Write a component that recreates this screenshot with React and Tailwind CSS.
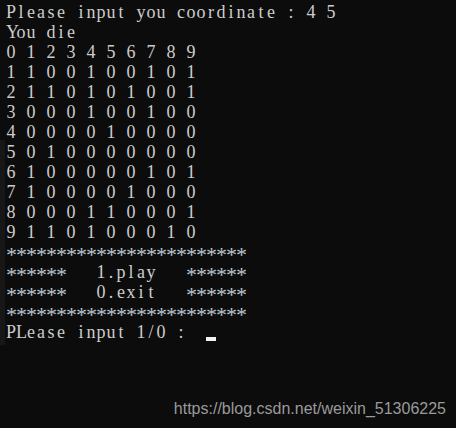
import React from "react";

const lines = [
  "Please input you coordinate : 4 5",
  "You die",
  "0 1 2 3 4 5 6 7 8 9",
  "1 1 0 0 1 0 0 1 0 1",
  "2 1 1 0 1 0 1 0 0 1",
  "3 0 0 0 1 0 0 1 0 0",
  "4 0 0 0 0 1 0 0 0 0",
  "5 0 1 0 0 0 0 0 0 0",
  "6 1 0 0 0 0 0 1 0 1",
  "7 1 0 0 0 0 1 0 0 0",
  "8 0 0 0 1 1 0 0 0 1",
  "9 1 1 0 1 0 0 0 1 0",
  "************************",
  "******   1.play   ******",
  "******   0.exit   ******",
  "************************",
  "PLease input 1/0 :  ",
];

// console cell: every char takes 10px like the windows console font
function Cell({ ch }) {
  if (ch === "*") {
    return (
      <span className="inline-block w-[10px] h-[20px] text-center text-[22px] leading-[26px] text-[#b9c3cc]">
        *
      </span>
    );
  }
  return (
    <span className="inline-block w-[10px] h-[20px] text-center">
      {ch === " " ? "\u00a0" : ch}
    </span>
  );
}

function Line({ text, cursor }) {
  return (
    <div className="flex h-[20px] whitespace-pre">
      {text.split("").map((ch, i) => (
        <Cell key={i} ch={ch} />
      ))}
      {cursor && (
        <span className="inline-block w-[10px] h-[20px] relative">
          <span className="absolute left-0 top-[15px] w-[10px] h-[4px] bg-[#f2f2f2]" />
        </span>
      )}
    </div>
  );
}

export default function App() {
  return (
    <div className="w-[456px] h-[428px] bg-[#0c0c0c] flex flex-col overflow-hidden">
      <div className="flex">
        <div className="w-[6px] shrink-0">
          <div className="mt-[140px] h-[205px] w-[5px] bg-[#171717]" />
        </div>
        <div
          className="pt-[2px] text-[18px] leading-[20px] text-[#cccccc]"
          style={{ fontFamily: '"Liberation Serif", "Noto Sans CJK SC", serif' }}
        >
          {lines.map((l, i) => (
            <Line key={i} text={l} cursor={i === lines.length - 1} />
          ))}
        </div>
      </div>
      <div className="flex-1" />
      <div
        className="flex justify-end pr-[10px] pb-[10px] text-[16px] leading-[18px] text-[#9a9a9a]"
        style={{ fontFamily: '"Liberation Sans", Arial, sans-serif' }}
      >
        https://blog.csdn.net/weixin_51306225
      </div>
    </div>
  );
}
